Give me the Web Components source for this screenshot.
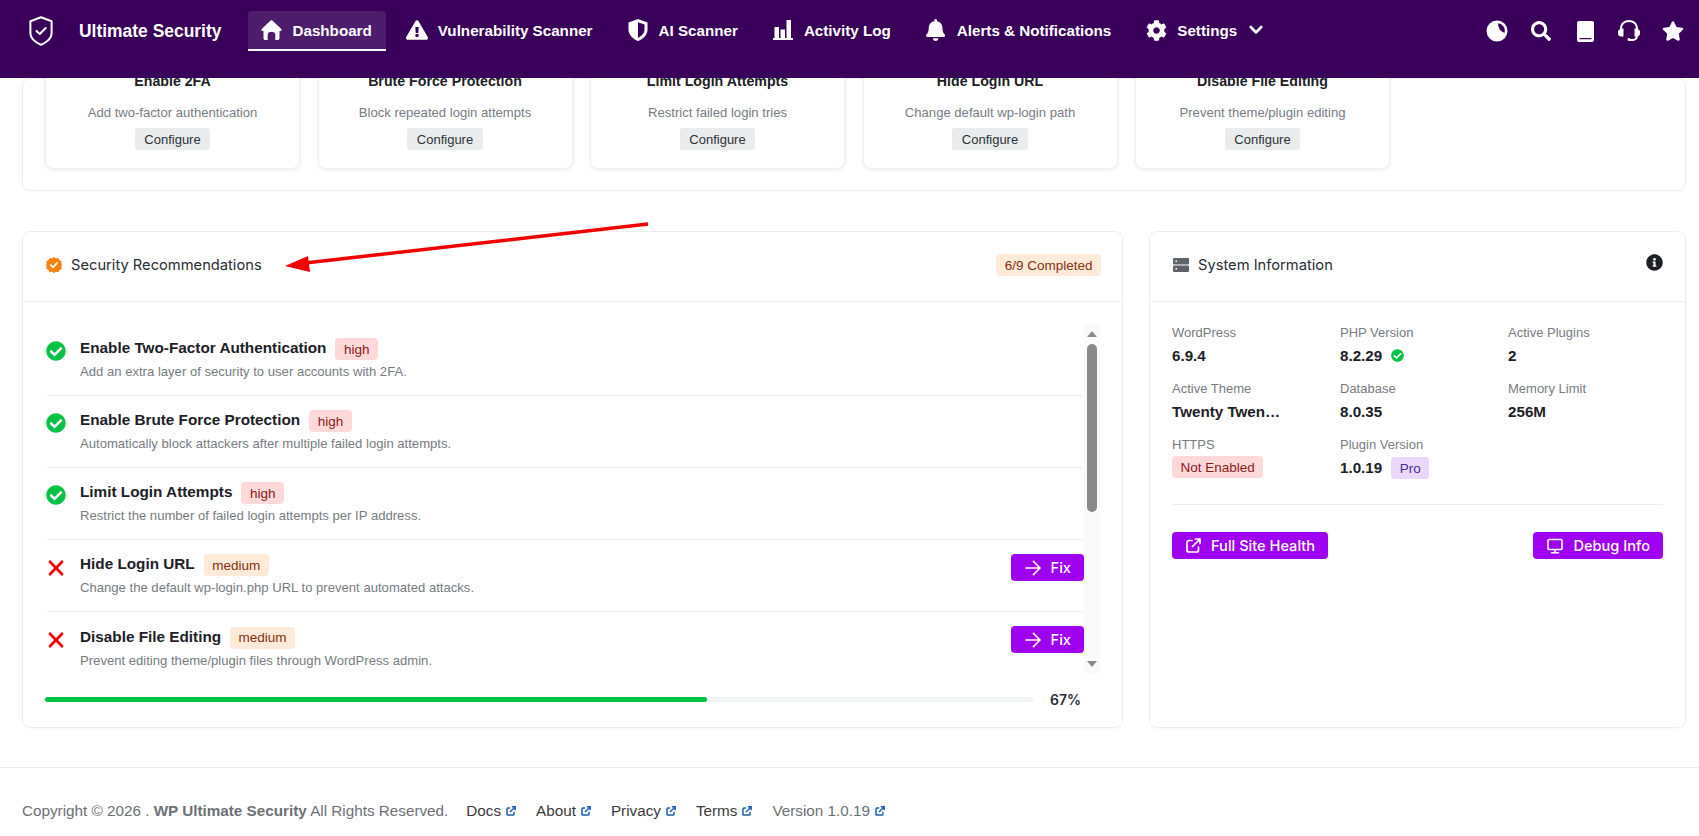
<!DOCTYPE html>
<html lang="en">
<head>
<meta charset="utf-8">
<title>Ultimate Security</title>
<style>
  html, body { margin: 0; height: 100%; background: #fff; overflow: hidden; font-family: "Liberation Sans", sans-serif; }
  main { display: block; height: 689px; padding: 0 13px 0 22px; box-sizing: border-box; }
  .columns { display: flex; gap: 26px; margin-top: 40px; }
  .columns > :first-child { width: 1101px; flex: none; }
  .columns > :last-child { flex: 1; }
  .tile-row { display: flex; gap: 17.5px; }
  .pointer { position: absolute; left: 280px; top: 220px; }
</style>
</head>
<body>
<template id="navbar-tpl">
  <style>
    :host { display: flex; position: sticky; top: 0; z-index: 10; height: 78px; box-sizing: border-box; background: #39005a; padding: 11px 15px 0 29px; align-items: flex-start; color: #fff; font: 700 15.2px "Liberation Sans", sans-serif; }
    .logo { display: flex; align-items: center; height: 40px; }
    ::slotted(svg) { width: 24px; height: 30px; margin-right: 26px; flex: none; margin-top: 0; }
    .brand { font-size: 17.45px; margin-right: 27px; line-height: 38px; white-space: nowrap; }
    .links { display: flex; gap: 8px; }
    .tools { margin-left: auto; display: flex; gap: 22px; height: 40px; align-items: center; }
  </style>
  <div class="logo"><slot name="logo"></slot><span class="brand"><slot name="brand"></slot></span></div>
  <div class="links"><slot></slot></div>
  <div class="tools"><slot name="tools"></slot></div>
</template>

<template id="nav-item-tpl">
  <style>
    :host { display: flex; align-items: center; box-sizing: border-box; height: 40px; padding: 0 14px 2px 13px; gap: 11px; white-space: nowrap; border-radius: 3px 3px 0 0; }
    :host([active]) { background: #4d1c6c; border-bottom: 2px solid #fff; padding-bottom: 0; }
    .icon { display: flex; width: 20px; height: 20px; justify-content: center; align-items: center; }
    ::slotted(svg) { fill: #fff; height: 20px; }
  </style>
  <span class="icon"><slot name="icon"></slot></span>
  <slot></slot>
  <slot name="after"></slot>
</template>

<template id="tool-tpl">
  <style>
    :host { display: flex; width: 22px; height: 22px; justify-content: center; align-items: center; }
    ::slotted(svg) { fill: #fff; height: 20px; }
  </style>
  <slot></slot>
</template>

<template id="panel-tpl">
  <style>
    :host { display: block; box-sizing: border-box; background: #fff; border: 1px solid #eceef0; border-radius: 8px; box-shadow: 0 1px 2px rgba(0,0,0,.03); }
    header { display: flex; box-sizing: border-box; height: 70px; padding: 0 21px 3px 23px; align-items: center; border-bottom: 1px solid #eceef0; }
    .title { display: flex; align-items: center; gap: 9px; font: 400 14.7px Inter, sans-serif; color: #2a2d34; }
    .aside { margin-left: auto; display: flex; }
    :host([plain]) header { display: none; }
  </style>
  <header>
    <div class="title"><slot name="icon"></slot><slot name="title"></slot></div>
    <div class="aside"><slot name="aside"></slot></div>
  </header>
  <slot></slot>
</template>

<template id="tile-tpl">
  <style>
    :host { display: flex; flex-direction: column; align-items: center; box-sizing: border-box; width: 255px; height: 99px; margin-top: -9px; background: #fff; border: 1px solid #eceef0; border-radius: 0 0 8px 8px; box-shadow: 0 1px 4px rgba(0,0,0,.08); }
    h3 { margin: 0; font: 700 14.2px/20px "Liberation Sans", sans-serif; color: #1d2127; }
    p { margin: 12px 0 0; font: 400 13.1px/20px "Liberation Sans", sans-serif; color: #787c82; }
    span { margin-top: 5px; height: 22px; padding: 0 9.5px; background: #e9ebec; border-radius: 3px; font: 400 13px/23px "Liberation Sans", sans-serif; color: #2c3338; }
  </style>
  <h3><slot name="title"></slot></h3>
  <p><slot name="desc"></slot></p>
  <span>Configure</span>
</template>

<template id="badge-tpl">
  <style>
    :host { display: inline-flex; align-items: center; box-sizing: border-box; height: 22px; padding: 0 8.5px; border-radius: 4px; font: 400 13.5px "Liberation Sans", sans-serif; white-space: nowrap; background: #ffd9d9; color: #8c1a1a; }
    :host([tone="warn"]) { background: #ffead9; color: #86300f; }
    :host([tone="pro"]) { background: #e9d8f8; color: #4a2c9a; margin-top: 2px; }
  </style>
  <slot></slot>
</template>

<template id="rec-row-tpl">
  <style>
    :host { display: grid; grid-template-columns: 34.5px 1fr auto; box-sizing: border-box; height: 72px; border-bottom: 1px solid #eceef0; align-items: center; }
    :host(:last-child) { border-bottom: 0; }
    .mark { display: flex; width: 20px; justify-content: center; align-self: start; margin-top: 17px; }
    .head { display: flex; align-items: center; gap: 9px; height: 22px; position: relative; top: 1px; }
    .name { font: 700 15.3px "Liberation Sans", sans-serif; color: #1d2127; position: relative; top: -1px; }
    p { margin: 3px 0 0; font: 400 13.1px/20px "Liberation Sans", sans-serif; color: #787c82; }
    ::slotted([slot="action"]) { align-self: start; margin-top: 14px; }
  </style>
  <div class="mark"><slot name="mark"></slot></div>
  <div>
    <div class="head"><span class="name"><slot name="name"></slot></span><slot name="level"></slot></div>
    <p><slot name="desc"></slot></p>
  </div>
  <slot name="action"></slot>
</template>

<template id="button-tpl">
  <style>
    :host { display: inline-flex; align-items: center; box-sizing: border-box; height: 27px; gap: 10px; padding: 0 13px 0 14px; background: #a000f0; color: #fff; border-radius: 4px; font: 500 14.6px Inter, sans-serif; white-space: nowrap; }
    ::slotted(svg) { stroke: #fff; fill: none; flex: none; }
  </style>
  <slot name="icon"></slot><slot></slot>
</template>

<template id="stat-tpl">
  <style>
    :host { display: block; min-width: 0; }
    .label { font: 400 13px/20px "Liberation Sans", sans-serif; color: #787c82; }
    .value { display: flex; align-items: center; gap: 9px; height: 24px; font: 700 15.2px "Liberation Sans", sans-serif; color: #1d2127; }
  </style>
  <div class="label"><slot name="label"></slot></div>
  <div class="value"><slot></slot></div>
</template>

<template id="footer-tpl">
  <style>
    :host { display: flex; align-items: flex-start; box-sizing: border-box; height: 69px; padding: 33px 0 0 22px; border-top: 1px solid #eceef0; font: 400 15.25px/20px "Liberation Sans", sans-serif; color: #6d7075; white-space: nowrap; }
    .links { display: flex; margin-left: 18px; gap: 20px; color: #3a3a3a; }
  </style>
  <span><slot></slot></span>
  <div class="links"><slot name="links"></slot></div>
</template>

<template id="foot-link-tpl">
  <style>
    :host { display: inline-flex; align-items: center; gap: 5px; }
    svg { width: 10px; height: 10px; fill: none; stroke: #1d5fb4; stroke-width: 1.8; }
  </style>
  <slot></slot>
  <svg viewBox="0 0 12 12"><path d="M5 2.500H2.200a1 1 0 0 0-1 1v6.300a1 1 0 0 0 1 1h6.300a1 1 0 0 0 1-1V7M4.800 7.200 10.600 1.400M7 1h4v4"/></svg>
</template>

<us-navbar>
  <svg slot="logo" viewBox="0 0 24 30"><path d="M12 1.200 22.600 5.200V17.500C22.600 22.500 17 26.500 12 28.800 7 26.500 1.400 22.500 1.400 17.500V5.200Z" fill="none" stroke="#fff" stroke-width="2" stroke-linejoin="round"/><path d="M7.500 15 10.800 18 16.700 12" fill="none" stroke="#fff" stroke-width="2" stroke-linecap="round" stroke-linejoin="round"/></svg>
  <span slot="brand">Ultimate Security</span>
  <us-nav-item active>
    <svg slot="icon" viewBox="0 0 21 20" style="width:21px;flex:none"><path d="M10.500.3c.6 0 1 .2 1.400.6l8.400 8c.8.800.3 2.100-.8 2.100h-1v7.200c0 1-.8 1.800-1.800 1.800h-2.400v-5.400c0-1.500-1.100-2.700-2.600-2.700H9.300c-1.500 0-2.600 1.200-2.600 2.700V20H4.300c-1 0-1.800-.8-1.800-1.800V11h-1C.4 11-.1 9.700.7 8.900l8.400-8c.4-.4.8-.6 1.400-.6z"/></svg>
    Dashboard
  </us-nav-item>
  <us-nav-item>
    <svg slot="icon" viewBox="0 0 576 512" style="width:22px;flex:none"><path d="M569.517 440.013C587.975 472.007 564.806 512 527.94 512H48.054c-36.937 0-59.999-40.055-41.577-71.987L246.423 23.985c18.467-32.009 64.72-31.951 83.154 0l239.94 416.028zM288 354c-25.405 0-46 20.595-46 46s20.595 46 46 46 46-20.595 46-46-20.595-46-46-46zm-43.673-165.346l7.418 136c.347 6.364 5.609 11.346 11.982 11.346h48.546c6.373 0 11.635-4.982 11.982-11.346l7.418-136c.375-6.874-5.098-12.654-11.982-12.654h-63.383c-6.884 0-12.356 5.78-11.981 12.654z"/></svg>
    Vulnerability Scanner
  </us-nav-item>
  <us-nav-item>
    <svg slot="icon" viewBox="0 0 20 22" style="height:22px;flex:none"><path fill-rule="evenodd" d="M10 0 19.500 3.500V10.500C19.500 16 15 20 10 22 5 20 .5 16 .5 10.500V3.500ZM10 3.300V18.800C13.500 17.200 16.500 14.400 16.500 10.500V5.600Z"/></svg>
    AI Scanner
  </us-nav-item>
  <us-nav-item>
    <svg slot="icon" viewBox="0 0 20 20"><path d="M1.500 7H6V18H1.500ZM7.500 9.500H12V18H7.500ZM13.500 0H18V18H13.500ZM0 18H20V20H0Z"/></svg>
    Activity Log
  </us-nav-item>
  <us-nav-item>
    <svg slot="icon" viewBox="0 0 448 512" style="height:22px;flex:none"><path d="M224 512c35.32 0 63.97-28.65 63.97-64H160.03c0 35.35 28.65 64 63.97 64zm215.39-149.71c-19.32-20.76-55.47-51.99-55.47-154.29 0-77.7-54.48-139.9-127.94-155.16V32c0-17.67-14.32-32-31.98-32s-31.98 14.33-31.98 32v20.84C118.56 68.1 64.08 130.3 64.08 208c0 102.3-36.15 133.53-55.47 154.29-6 6.45-8.66 14.16-8.61 21.71.11 16.4 12.98 32 32.1 32h383.8c19.12 0 32-15.6 32.1-32 .05-7.55-2.61-15.27-8.61-21.71z"/></svg>
    Alerts &amp; Notifications
  </us-nav-item>
  <us-nav-item>
    <svg slot="icon" viewBox="0 0 512 512" style="height:21px;flex:none"><path d="M487.4 315.7l-42.6-24.6c4.3-23.2 4.3-47 0-70.2l42.6-24.6c4.9-2.8 7.1-8.6 5.5-14-11.1-35.6-30-67.8-54.7-94.6-3.8-4.1-10-5.1-14.8-2.3L380.8 110c-17.9-15.4-38.5-27.3-60.8-35.1V25.8c0-5.6-3.9-10.5-9.4-11.7-36.7-8.2-74.3-7.8-109.2 0-5.5 1.2-9.4 6.1-9.4 11.7V75c-22.2 7.9-42.8 19.8-60.8 35.1L88.7 85.5c-4.9-2.8-11-1.9-14.8 2.3-24.7 26.7-43.6 58.9-54.7 94.6-1.7 5.4.6 11.2 5.5 14L67.3 221c-4.3 23.2-4.3 47 0 70.2l-42.6 24.6c-4.9 2.8-7.1 8.6-5.5 14 11.1 35.6 30 67.8 54.7 94.6 3.8 4.1 10 5.1 14.8 2.3l42.6-24.6c17.9 15.4 38.5 27.3 60.8 35.1v49.2c0 5.6 3.9 10.5 9.4 11.7 36.7 8.2 74.3 7.8 109.2 0 5.5-1.2 9.4-6.1 9.4-11.7v-49.2c22.2-7.9 42.8-19.8 60.8-35.1l42.6 24.6c4.9 2.8 11 1.9 14.8-2.3 24.7-26.7 43.6-58.9 54.7-94.6 1.5-5.5-.7-11.3-5.6-14.1zM256 336c-44.1 0-80-35.9-80-80s35.9-80 80-80 80 35.900 80 80-35.900 80-80 80z"/></svg>
    Settings
    <svg slot="after" viewBox="0 0 14 10" style="width:14px;height:10px;margin-left:1px;fill:none;stroke:#fff;stroke-width:2.6;stroke-linecap:round;stroke-linejoin:round"><path d="M1.800 2 7 7.500 12.200 2"/></svg>
  </us-nav-item>
  <us-tool slot="tools"><svg viewBox="0 0 22 22" style="width:22px;height:22px;margin:0"><path fill-rule="evenodd" d="M11 .5a10.500 10.500 0 1 1 0 21 10.500 10.500 0 0 1 0-21ZM12.200 3.200A8 8 0 0 1 18.800 12.800 8.500 8.500 0 0 1 12.200 3.200Z"/></svg></us-tool>
  <us-tool slot="tools"><svg viewBox="0 0 512 512" style="width:20px;height:20px;margin:0"><path d="M505 442.7L405.3 343c-4.5-4.5-10.6-7-17-7H372c27.6-35.3 44-79.7 44-128C416 93.1 322.9 0 208 0S0 93.1 0 208s93.1 208 208 208c48.300 0 92.700-16.400 128-44v16.300c0 6.400 2.500 12.500 7 17l99.700 99.700c9.400 9.400 24.600 9.400 33.900 0l28.300-28.300c9.400-9.400 9.400-24.600.1-34zM208 336c-70.700 0-128-57.200-128-128 0-70.700 57.200-128 128-128 70.700 0 128 57.200 128 128 0 70.700-57.200 128-128 128z"/></svg></us-tool>
  <us-tool slot="tools"><svg viewBox="0 0 17 21" style="width:17px;height:21px;margin:0"><path fill-rule="evenodd" d="M2 0H15C16.100 0 17 .9 17 2V19C17 20.100 16.100 21 15 21H2C.9 21 0 20.100 0 19V2C0 .9.9 0 2 0ZM2.500 17V18.300H14.500V17Z"/></svg></us-tool>
  <us-tool slot="tools"><svg viewBox="0 0 22 22" style="width:22px;height:22px;margin:0"><path fill-rule="evenodd" d="M11 0C5.500 0 2 3.800 2 8.500V9.200C.8 9.600 0 10.700 0 12V13.500C0 15.200 1.300 16.500 3 16.500H5.500V8.500H4C4 4.900 6.900 2 11 2S18 4.900 18 8.500H16.500V16.500H17.800C17.600 17.900 16.500 19 15 19H12.500C12.300 18.500 11.700 18 11 18 10.100 18 9.500 18.700 9.500 19.500S10.100 21 11 21H15C17.700 21 19.800 19 20 16.300 21.200 15.900 22 14.800 22 13.500V12C22 10.700 21.200 9.600 20 9.200V8.500C20 3.800 16.500 0 11 0Z"/></svg></us-tool>
  <us-tool slot="tools"><svg viewBox="0 0 576 512" style="width:22px;height:20px;margin:0"><path d="M259.3 17.8L194 150.2 47.9 171.5c-26.2 3.8-36.7 36.1-17.7 54.6l105.7 103-25 145.5c-4.5 26.3 23.2 46 46.4 33.7L288 439.6l130.7 68.7c23.2 12.2 50.9-7.4 46.4-33.7l-25-145.5 105.7-103c19-18.5 8.5-50.8-17.7-54.6L382 150.2 316.7 17.8c-11.7-23.6-45.6-23.9-57.4 0z"/></svg></us-tool>
</us-navbar>

<main>
  <us-panel plain style="height:113px;padding:0 22px">
    <div class="tile-row">
      <us-tile><span slot="title">Enable 2FA</span><span slot="desc">Add two-factor authentication</span></us-tile>
      <us-tile><span slot="title">Brute Force Protection</span><span slot="desc">Block repeated login attempts</span></us-tile>
      <us-tile><span slot="title">Limit Login Attempts</span><span slot="desc">Restrict failed login tries</span></us-tile>
      <us-tile><span slot="title">Hide Login URL</span><span slot="desc">Change default wp-login path</span></us-tile>
      <us-tile><span slot="title">Disable File Editing</span><span slot="desc">Prevent theme/plugin editing</span></us-tile>
    </div>
  </us-panel>

  <div class="columns">
    <us-panel style="height:497px">
      <svg slot="icon" width="16" height="16" viewBox="0 0 16 16"><path fill="#f6820d" d="M8 0 10 1.400 12.400 1.100 13.500 3.200 15.600 4.300 15.300 6.700 16 8 15.300 10 15.600 12 13.500 13 12.400 15.200 10 14.800 8 16 6 14.800 3.600 15.200 2.500 13 .4 12 .7 10 0 8 .7 6.700.4 4.300 2.500 3.200 3.600 1.100 6 1.400Z"/><path d="M4.800 8.200 7 10.300 11.200 5.900" fill="none" stroke="#fff" stroke-width="1.800" stroke-linecap="round" stroke-linejoin="round"/></svg>
      <span slot="title">Security Recommendations</span>
      <us-badge slot="aside" tone="warn">6/9 Completed</us-badge>
      <us-rec-list>
        <us-rec-row>
          <svg slot="mark" width="20" height="20" viewBox="0 0 512 512" fill="#00c244"><path d="M504 256c0 136.967-111.033 248-248 248S8 392.967 8 256 119.033 8 256 8s248 111.033 248 248zM227.314 387.314l184-184c6.248-6.248 6.248-16.379 0-22.627l-22.627-22.627c-6.248-6.249-16.379-6.249-22.628 0L216 308.118l-70.059-70.059c-6.248-6.248-16.379-6.248-22.628 0l-22.627 22.627c-6.248 6.248-6.248 16.379 0 22.627l104 104c6.249 6.249 16.379 6.249 22.628.001z"/></svg>
          <span slot="name">Enable Two-Factor Authentication</span>
          <us-badge slot="level">high</us-badge>
          <span slot="desc">Add an extra layer of security to user accounts with 2FA.</span>
        </us-rec-row>
        <us-rec-row>
          <svg slot="mark" width="20" height="20" viewBox="0 0 512 512" fill="#00c244"><path d="M504 256c0 136.967-111.033 248-248 248S8 392.967 8 256 119.033 8 256 8s248 111.033 248 248zM227.314 387.314l184-184c6.248-6.248 6.248-16.379 0-22.627l-22.627-22.627c-6.248-6.249-16.379-6.249-22.628 0L216 308.118l-70.059-70.059c-6.248-6.248-16.379-6.248-22.628 0l-22.627 22.627c-6.248 6.248-6.248 16.379 0 22.627l104 104c6.249 6.249 16.379 6.249 22.628.001z"/></svg>
          <span slot="name">Enable Brute Force Protection</span>
          <us-badge slot="level">high</us-badge>
          <span slot="desc">Automatically block attackers after multiple failed login attempts.</span>
        </us-rec-row>
        <us-rec-row>
          <svg slot="mark" width="20" height="20" viewBox="0 0 512 512" fill="#00c244"><path d="M504 256c0 136.967-111.033 248-248 248S8 392.967 8 256 119.033 8 256 8s248 111.033 248 248zM227.314 387.314l184-184c6.248-6.248 6.248-16.379 0-22.627l-22.627-22.627c-6.248-6.249-16.379-6.249-22.628 0L216 308.118l-70.059-70.059c-6.248-6.248-16.379-6.248-22.628 0l-22.627 22.627c-6.248 6.248-6.248 16.379 0 22.627l104 104c6.249 6.249 16.379 6.249 22.628.001z"/></svg>
          <span slot="name">Limit Login Attempts</span>
          <us-badge slot="level">high</us-badge>
          <span slot="desc">Restrict the number of failed login attempts per IP address.</span>
        </us-rec-row>
        <us-rec-row>
          <svg slot="mark" width="16" height="16" viewBox="0 0 16 16" style="margin-top:3px"><path d="M1.200 1 14.800 15M14.800 1 1.200 15" stroke="#f00000" stroke-width="2.700"/></svg>
          <span slot="name">Hide Login URL</span>
          <us-badge slot="level" tone="warn">medium</us-badge>
          <span slot="desc">Change the default wp-login.php URL to prevent automated attacks.</span>
          <us-button slot="action"><svg slot="icon" width="16" height="16" viewBox="0 0 17 17" stroke-width="1.800" stroke-linecap="round" stroke-linejoin="round"><path d="M1 8.500H16M9 1.500 16 8.500 9 15.500"/></svg>Fix</us-button>
        </us-rec-row>
        <us-rec-row>
          <svg slot="mark" width="16" height="16" viewBox="0 0 16 16" style="margin-top:3px"><path d="M1.200 1 14.800 15M14.800 1 1.200 15" stroke="#f00000" stroke-width="2.700"/></svg>
          <span slot="name">Disable File Editing</span>
          <us-badge slot="level" tone="warn">medium</us-badge>
          <span slot="desc">Prevent editing theme/plugin files through WordPress admin.</span>
          <us-button slot="action"><svg slot="icon" width="16" height="16" viewBox="0 0 17 17" stroke-width="1.800" stroke-linecap="round" stroke-linejoin="round"><path d="M1 8.500H16M9 1.500 16 8.500 9 15.500"/></svg>Fix</us-button>
        </us-rec-row>
      </us-rec-list>
      <us-progress value="67"></us-progress>
    </us-panel>

    <us-panel style="height:497px">
      <svg slot="icon" width="16" height="16" viewBox="0 0 16 16" fill="#5f6368"><path fill-rule="evenodd" d="M1 1H15A1 1 0 0 1 16 2V6.500A1 1 0 0 1 15 7.500H1A1 1 0 0 1 0 6.500V2A1 1 0 0 1 1 1ZM2.500 3.500V5H4V3.500ZM1 8.500H15A1 1 0 0 1 16 9.500V14A1 1 0 0 1 15 15H1A1 1 0 0 1 0 14V9.500A1 1 0 0 1 1 8.500ZM2.500 11V12.500H4V11Z"/></svg>
      <span slot="title">System Information</span>
      <svg slot="aside" width="17" height="17" viewBox="0 0 512 512" fill="#1d2127" style="margin:-5px 1px 0 0"><path d="M256 8C119.043 8 8 119.083 8 256c0 136.997 111.043 248 248 248s248-111.003 248-248C504 119.083 392.957 8 256 8zm0 110c23.196 0 42 18.804 42 42s-18.804 42-42 42-42-18.804-42-42 18.804-42 42-42zm56 254c0 6.627-5.373 12-12 12h-88c-6.627 0-12-5.373-12-12v-24c0-6.627 5.373-12 12-12h12v-64h-12c-6.627 0-12-5.373-12-12v-24c0-6.627 5.373-12 12-12h64c6.627 0 12 5.373 12 12v100h12c6.627 0 12 5.373 12 12v24z"/></svg>
      <us-sysinfo>
        <us-stat><span slot="label">WordPress</span>6.9.4</us-stat>
        <us-stat><span slot="label">PHP Version</span>8.2.29 <svg width="13" height="13" viewBox="0 0 512 512" fill="#00c244"><path d="M504 256c0 136.967-111.033 248-248 248S8 392.967 8 256 119.033 8 256 8s248 111.033 248 248zM227.314 387.314l184-184c6.248-6.248 6.248-16.379 0-22.627l-22.627-22.627c-6.248-6.249-16.379-6.249-22.628 0L216 308.118l-70.059-70.059c-6.248-6.248-16.379-6.248-22.628 0l-22.627 22.627c-6.248 6.248-6.248 16.379 0 22.627l104 104c6.249 6.249 16.379 6.249 22.628.001z"/></svg></us-stat>
        <us-stat><span slot="label">Active Plugins</span>2</us-stat>
        <us-stat><span slot="label">Active Theme</span>Twenty Twen…</us-stat>
        <us-stat><span slot="label">Database</span>8.0.35</us-stat>
        <us-stat><span slot="label">Memory Limit</span>256M</us-stat>
        <us-stat><span slot="label">HTTPS</span><us-badge>Not Enabled</us-badge></us-stat>
        <us-stat><span slot="label">Plugin Version</span>1.0.19 <us-badge tone="pro">Pro</us-badge></us-stat>
        <us-button slot="actions"><svg slot="icon" width="15" height="15" viewBox="0 0 15 15" stroke-width="1.700" stroke-linecap="round" stroke-linejoin="round"><path d="M6 2.500H3a2 2 0 0 0-2 2V12a2 2 0 0 0 2 2h7.500a2 2 0 0 0 2-2V9M6.500 8.500 14 1M9.500 1H14V5.500"/></svg>Full Site Health</us-button>
        <us-button slot="actions"><svg slot="icon" width="16" height="16" viewBox="0 0 16 16" stroke-width="1.600" stroke-linecap="round" stroke-linejoin="round"><path d="M2 1.500H14A1 1 0 0 1 15 2.500V10.500A1 1 0 0 1 14 11.500H2A1 1 0 0 1 1 10.500V2.500A1 1 0 0 1 2 1.500ZM8 11.500V14.500M4.500 14.800H11.500"/></svg>Debug Info</us-button>
      </us-sysinfo>
    </us-panel>
  </div>
</main>

<us-footer>
  Copyright © 2026 . <b>WP Ultimate Security</b> All Rights Reserved.
  <us-foot-link slot="links">Docs</us-foot-link>
  <us-foot-link slot="links">About</us-foot-link>
  <us-foot-link slot="links">Privacy</us-foot-link>
  <us-foot-link slot="links">Terms</us-foot-link>
  <us-foot-link slot="links" style="color:#6d7075">Version 1.0.19</us-foot-link>
</us-footer>

<svg class="pointer" width="375" height="60" viewBox="280 220 375 60">
  <path d="M648 224 305 263" stroke="#f00000" stroke-width="3.500" fill="none"/>
  <path d="M285 266 308 256 310 272Z" fill="#f00000"/>
</svg>

<script>
class TemplateElement extends HTMLElement {
  constructor() {
    super();
    const root = this.attachShadow({mode: 'open'});
    const tpl = document.getElementById(this.constructor.templateId);
    root.appendChild(tpl.content.cloneNode(true));
  }
}
const simple = {
  'us-navbar': 'navbar-tpl',
  'us-nav-item': 'nav-item-tpl',
  'us-tool': 'tool-tpl',
  'us-panel': 'panel-tpl',
  'us-tile': 'tile-tpl',
  'us-badge': 'badge-tpl',
  'us-rec-row': 'rec-row-tpl',
  'us-button': 'button-tpl',
  'us-stat': 'stat-tpl',
  'us-footer': 'footer-tpl',
  'us-foot-link': 'foot-link-tpl',
};
Object.keys(simple).forEach((name) => {
  customElements.define(name, class extends TemplateElement {
    static get templateId() { return simple[name]; }
  });
});

class RecList extends HTMLElement {
  constructor() {
    super();
    this.attachShadow({mode: 'open'}).innerHTML = `
      <style>
        :host { display: flex; margin: 22px 22px 0 22.5px; height: 350px; }
        .rows { width: 1038.5px; flex: none; height: 350px; overflow: hidden; }
        .bar { width: 16px; background: #fafafa; display: flex; flex-direction: column; align-items: center; }
        .up, .down { width: 0; height: 0; border-left: 5.5px solid transparent; border-right: 5.5px solid transparent; }
        .up { border-bottom: 6px solid #8a8a8a; margin-top: 7px; }
        .thumb { width: 10px; height: 168px; background: #8a8a8a; border-radius: 5px; margin-top: 7px; }
        .down { border-top: 6px solid #8a8a8a; margin-top: auto; margin-bottom: 7px; }
      </style>
      <div class="rows"><slot></slot></div>
      <div class="bar"><div class="up"></div><div class="thumb"></div><div class="down"></div></div>`;
  }
}
customElements.define('us-rec-list', RecList);

class Progress extends HTMLElement {
  constructor() {
    super();
    this.attachShadow({mode: 'open'}).innerHTML = `
      <style>
        :host { display: flex; align-items: center; margin: 15px 0 0 22px; height: 20px; }
        .track { width: 988px; height: 5px; background: #f1f3f4; border-radius: 3px; }
        .fill { height: 100%; background: #00c244; border-radius: 3px; }
        span { margin-left: 17px; font: 600 14px Inter, sans-serif; color: #2a2d34; }
      </style>
      <div class="track"><div class="fill"></div></div><span></span>`;
  }
  connectedCallback() {
    const value = this.getAttribute('value');
    this.shadowRoot.querySelector('.fill').style.width = value + '%';
    this.shadowRoot.querySelector('span').textContent = value + '%';
  }
}
customElements.define('us-progress', Progress);

class SysInfo extends HTMLElement {
  constructor() {
    super();
    this.attachShadow({mode: 'open'}).innerHTML = `
      <style>
        :host { display: block; padding: 21px 21px 0 22px; }
        .grid { display: grid; grid-template-columns: repeat(3, 168px); grid-auto-rows: 56px; align-content: start; height: 182px; box-sizing: border-box; border-bottom: 1px solid #eceef0; width: 491px; }
        .actions { display: flex; justify-content: space-between; margin-top: 27px; width: 491px; }
      </style>
      <div class="grid"><slot></slot></div>
      <div class="actions"><slot name="actions"></slot></div>`;
  }
}
customElements.define('us-sysinfo', SysInfo);
</script>
</body>
</html>
